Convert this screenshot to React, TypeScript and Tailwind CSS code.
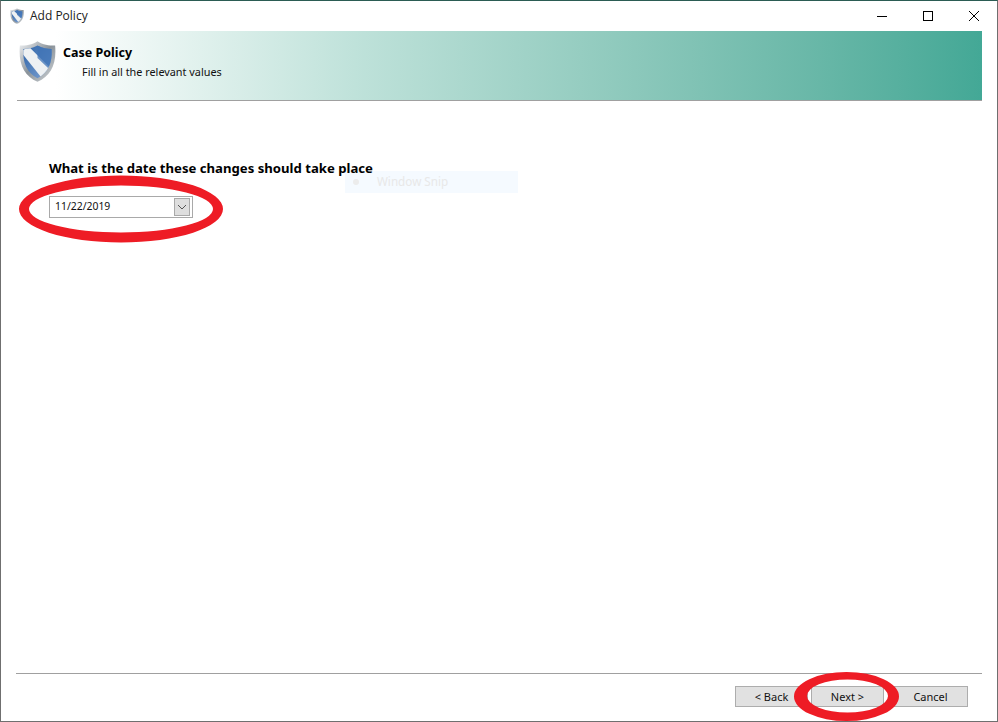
import React from "react";

function Shield({ size }: { size: number }) {
  const id = `s${size}`;
  return (
    <svg width={size} height={size * 1.16} viewBox="0 0 42 48" className="block">
      <defs>
        <linearGradient id={`${id}-rim`} x1="0" y1="0" x2="1" y2="1">
          <stop offset="0" stopColor="#f0f2f4" />
          <stop offset="0.5" stopColor="#8a9299" />
          <stop offset="1" stopColor="#d5d9dc" />
        </linearGradient>
        <linearGradient id={`${id}-blue`} x1="0" y1="0" x2="1" y2="1">
          <stop offset="0" stopColor="#2f64a8" />
          <stop offset="1" stopColor="#7fa3d3" />
        </linearGradient>
        <clipPath id={`${id}-in`}>
          <path d="M21 6 C27 9 32 10 37 10 C38 26 33 37 21 43 C9 37 4 26 5 10 C10 10 15 9 21 6 Z" />
        </clipPath>
      </defs>
      <path d="M21 1 C27 5 34 6 41 6 C43 27 36 41 21 47 C6 41 -1 27 1 6 C8 6 15 5 21 1 Z" fill={`url(#${id}-rim)`} />
      <path d="M21 6 C27 9 32 10 37 10 C38 26 33 37 21 43 C9 37 4 26 5 10 C10 10 15 9 21 6 Z" fill={`url(#${id}-blue)`} />
      <g clipPath={`url(#${id}-in)`}>
        <path d="M2 13 L11 7 L42 38 L30 48 Z" fill="#eef1f3" />
        <path d="M21 0 L42 0 L42 40 L21 20 Z" fill="#3f73b5" opacity="0.75" />
      </g>
    </svg>
  );
}

function Btn({ label, wide }: { label: string; wide?: boolean }) {
  return (
    <button className={`${wide ? "w-[75px]" : "w-[73px]"} h-[21px] pt-[1px] border border-[#adadad] bg-[#e1e1e1] text-[11px] text-[#111] flex items-center justify-center font-['Noto_Sans',sans-serif]`}>
      {label}
    </button>
  );
}

export default function App() {
  return (
    <div className="relative w-[998px] h-[722px] bg-white overflow-hidden flex flex-col border-x border-b border-t border-x-[#6f6f6f] border-b-[#6f6f6f] border-t-[#2b5c54] font-['Noto_Sans',sans-serif] text-black">
      <div className="h-[30px] flex items-center shrink-0 pl-[9px]">
        <Shield size={14} />
        <span className="ml-[6px] text-[12px] text-[#222] font-['Open_Sans',sans-serif]">Add Policy</span>
        <div className="ml-auto flex items-center text-black">
          <svg width="46" height="30" viewBox="0 0 46 30"><path d="M18 15.5h10" stroke="#000" strokeWidth="1" /></svg>
          <svg width="46" height="30" viewBox="0 0 46 30"><rect x="18.5" y="10.5" width="9" height="9" fill="none" stroke="#000" /></svg>
          <svg width="46" height="30" viewBox="0 0 46 30"><path d="M18 10l10 10M28 10l-10 10" stroke="#000" strokeWidth="1" /></svg>
        </div>
      </div>

      <div className="ml-[16px] mr-[15px] h-[70px] shrink-0 border-b border-[#a0a0a0] bg-gradient-to-r from-white from-[4%] via-[#bfe2da] via-[35%] to-[#43a896] flex items-start">
        <div className="ml-[2px] mt-[9px]"><Shield size={37} /></div>
        <div className="ml-[7px] mt-[15px]">
          <div className="text-[12.5px] font-bold leading-[14px]">Case Policy</div>
          <div className="ml-[19px] mt-[5px] text-[10.85px] leading-[14px] text-[#111]">Fill in all the relevant values</div>
        </div>
      </div>

      <div className="flex-1 pl-[48px] pt-[60px]">
        <div className="relative z-10 text-[13.15px] font-bold leading-[15px] whitespace-nowrap">What is the date these changes should take place</div>
        <div className="mt-[20px] w-[144px] h-[22px] border border-[#a9a9a9] flex items-center justify-between pl-[5px] pr-[2px]">
          <span className="text-[10.4px] text-[#111]">11/22/2019</span>
          <span className="w-[16px] h-[18px] bg-[#dedede] border border-[#a9a9a9] flex items-center justify-center">
            <svg width="10" height="6" viewBox="0 0 10 6"><path d="M1 1l4 4 4-4" fill="none" stroke="#555" /></svg>
          </span>
        </div>
      </div>

      <div className="mx-[15px] h-[48px] shrink-0 border-t border-[#a0a0a0] pt-[12px] flex justify-end gap-[3px] pr-[14px]">
        <Btn label="< Back" />
        <Btn label="Next >" />
        <div className="ml-[6px]"><Btn label="Cancel" wide /></div>
      </div>

      <div className="absolute left-[344px] top-[170px] w-[173px] h-[22px] bg-[#f5faff] flex items-center pl-[8px] text-[11.7px] text-[#e8e8e8]">
        <span className="w-[6px] h-[6px] rounded-full bg-[#ececec]" />
        <span className="ml-[18px]">Window Snip</span>
      </div>

      <svg className="absolute left-[-1px] top-[-1px] z-20" width="998" height="722" viewBox="0 0 998 722">
        <path
          fillRule="evenodd"
          fill="#ee1c25"
          d="M19 209a102 33.5 0 1 0 204 0a102 33.5 0 1 0 -204 0Z M29 209a92 23.5 0 1 0 184 0a92 23.5 0 1 0 -184 0Z M794 696.5a52.5 24.5 0 1 0 105 0a52.5 24.5 0 1 0 -105 0Z M807 696a40.5 16.5 0 1 0 81 0a40.5 16.5 0 1 0 -81 0Z"
        />
      </svg>
    </div>
  );
}
